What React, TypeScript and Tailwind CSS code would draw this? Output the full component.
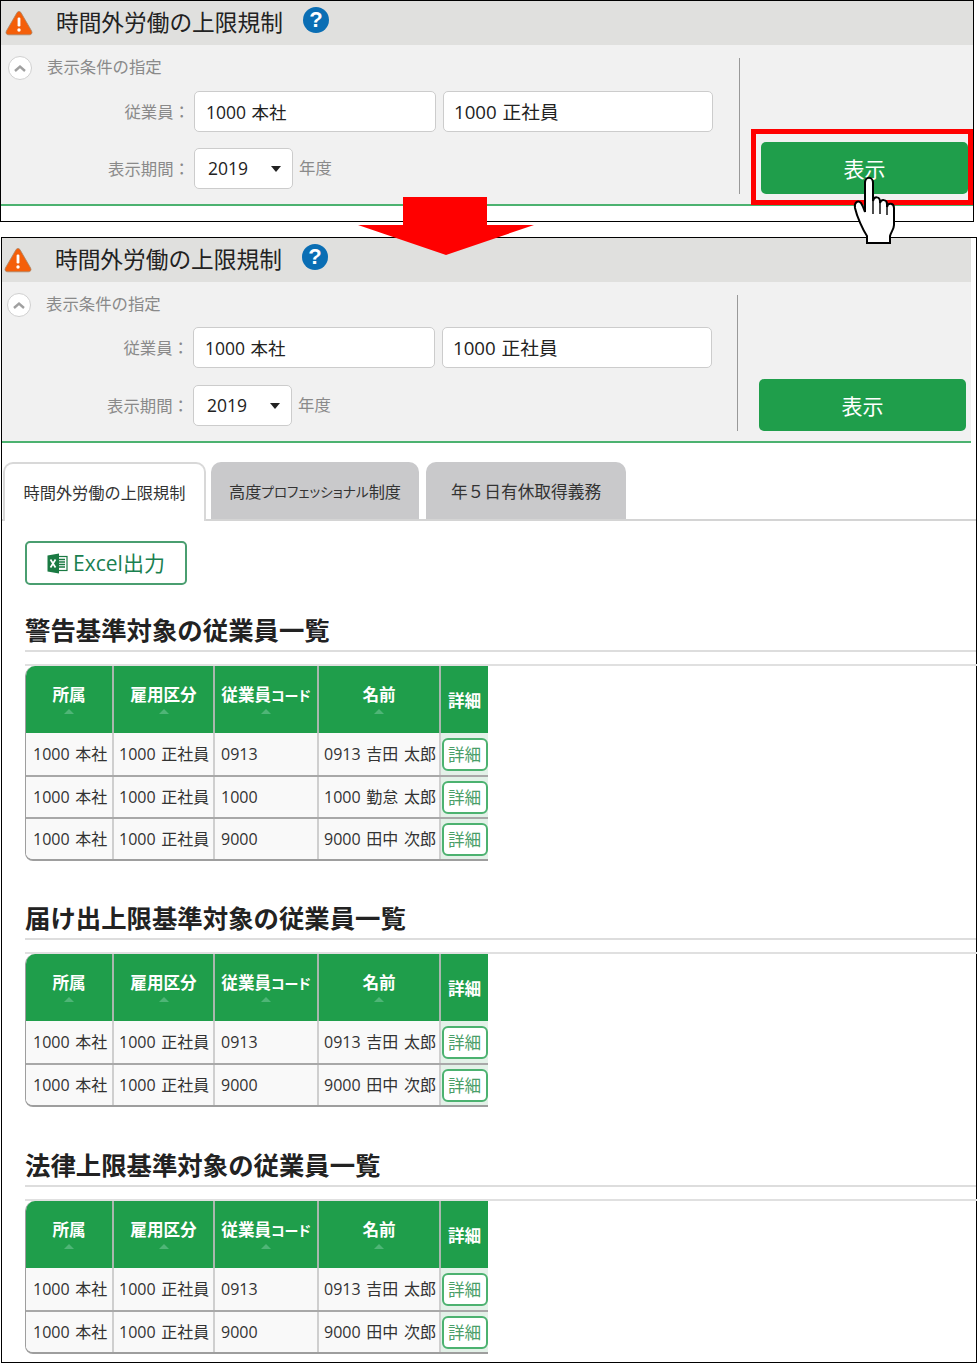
import React from "react";

const FONT = "font-['Open_Sans','Noto_Sans_CJK_JP',sans-serif]";

function Warn() {
  return (
    <svg width="28" height="26" viewBox="0 0 28 26" className="shrink-0">
      <path d="M14 1.5 C15 1.5 15.6 2 16.2 3 L26.6 21 C27.6 23 26.6 24.8 24.4 24.8 L3.6 24.8 C1.4 24.8 .4 23 1.4 21 L11.8 3 C12.4 2 13 1.5 14 1.5 Z" fill="#f45f0a" stroke="#a8866a" strokeWidth="0.8" />
      <rect x="12.6" y="7.5" width="2.8" height="9" rx="1.2" fill="#fff" />
      <circle cx="14" cy="20" r="1.7" fill="#fff" />
    </svg>
  );
}

function Help() {
  return (
    <span className="ml-[20px] mt-[-6px] flex h-[26px] w-[26px] items-center justify-center rounded-full bg-[#0a6eb4] text-[22px] font-bold leading-none text-white font-['Liberation_Sans',sans-serif]">?</span>
  );
}

function Chevron() {
  return (
    <span className="flex h-[24px] w-[24px] items-center justify-center rounded-full border border-[#d0d0d0] bg-white">
      <svg width="14" height="9" viewBox="0 0 14 9"><path d="M2 7 L7 2.5 L12 7" fill="none" stroke="#a0a0a0" strokeWidth="2.4" /></svg>
    </span>
  );
}

function Field({ w, children }: { w: string; children: React.ReactNode }) {
  return (
    <div className={`${w} flex h-[41px] items-center rounded-[5px] border border-[#cccccc] bg-white pt-[1px] text-[#222] [word-spacing:1px]`}>{children}</div>
  );
}

function Condition({ second }: { second?: boolean }) {
  return (
    <>
      <div className={`flex h-[44px] items-center bg-[#e0e0de] ${second ? "pl-[2px]" : "pl-[4px]"}`}>
        <Warn />
        <span className="ml-[23px] text-[22.7px] text-[#222]">時間外労働の上限規制</span>
        <Help />
      </div>
      <div className="flex h-[159px] bg-[#f1f1f1]">
        <div className={second ? "w-[735px] shrink-0 pl-[5px] pt-[11px]" : "w-[738px] shrink-0 pl-[7px] pt-[11px]"}>
          <div className="flex items-center">
            <Chevron />
            <span className="ml-[15px] mt-[-2px] text-[16.4px] text-[#8a8a8a]">表示条件の指定</span>
          </div>
          <div className={`${second ? "mt-[10px]" : "mt-[11px]"} flex items-center`}>
            <span className="w-[182px] pt-[1px] text-right text-[16.4px] text-[#8a8a8a]">従業員：</span>
            <Field w="w-[242px] ml-[4px] pl-[11px] text-[17.5px]">1000 本社</Field>
            <Field w="w-[270px] ml-[7px] pl-[10px] text-[18.7px]">1000 正社員</Field>
          </div>
          <div className={`${second ? "mt-[17px]" : "mt-[16px]"} flex items-center`}>
            <span className="w-[182px] pt-[1px] text-right text-[16.4px] text-[#8a8a8a]">表示期間：</span>
            <div className="ml-[4px] flex h-[41px] w-[99px] items-center justify-between rounded-[5px] border border-[#cccccc] bg-white pl-[13px] pr-[11px] text-[17.5px] text-[#222]">
              2019
              <span className="h-0 w-0 border-x-[5px] border-t-[6px] border-x-transparent border-t-[#222]" />
            </div>
            <span className="ml-[6px] text-[16.4px] text-[#8a8a8a]">年度</span>
          </div>
        </div>
        <div className="flex flex-1">
          <div className="mt-[13px] h-[136px] w-[1px] bg-[#999999]" />
          <div className="flex-1 pl-[21px] pt-[97px]">
            <div className="flex h-[52px] w-[207px] items-center justify-center rounded-[5px] bg-[#1f9e4b] pt-[3px] text-[21px] text-white">表示</div>
          </div>
        </div>
      </div>
      <div className="h-[2px] bg-[#4cb270]" />
    </>
  );
}

type Row = [string, string, string, string];

function Excel() {
  return (
    <svg width="21" height="21" viewBox="0 0 21 21" className="shrink-0">
      <rect x="10" y="3.5" width="10" height="14" fill="#fff" stroke="#1a7a43" strokeWidth="1.2" />
      <path d="M12 6.5h6M12 9h6M12 11.5h6M12 14h6" stroke="#1a7a43" strokeWidth="1.3" />
      <path d="M0.5 2.5 L12 0.5 V20.5 L0.5 18.5 Z" fill="#1a7a43" />
      <path d="M3.5 6.5 L8.5 14.5 M8.5 6.5 L3.5 14.5" stroke="#fff" strokeWidth="1.7" />
    </svg>
  );
}

function Th({ w, label, sort = true }: { w: string; label: React.ReactNode; sort?: boolean }) {
  return (
    <div className={`${w} flex flex-col items-center justify-center text-[16.6px] font-bold text-white ${sort ? "border-r-2 border-[#a9b7ae]" : ""}`}>
      <span className={sort ? "mt-[-2px] whitespace-nowrap" : "mt-[3px]"}>{label}</span>
      {sort && <span className="mt-[2px] h-0 w-0 border-x-[5px] border-b-[5px] border-x-transparent border-b-[#4fb577]" />}
    </div>
  );
}

function Td({ w, children, cls = "" }: { w: string; children: React.ReactNode; cls?: string }) {
  return <div className={`${w} ${cls} flex items-center whitespace-nowrap border-r-2 border-[#cfcfcf] bg-[#f9f9f9] text-[16px] text-[#333] [word-spacing:1.5px]`}>{children}</div>;
}

function Section({ title, rows, top }: { title: string; rows: Row[]; top: string }) {
  return (
    <section className={top}>
      <h2 className="h-[38px] border-b-2 border-[#dddddd] text-[25.4px] font-bold leading-[32px] text-[#222]">{title}</h2>
      <div className="mt-[12px] -mr-[4px] border-t-2 border-[#e0e0e0]">
        <div className="w-[463px] overflow-hidden rounded-bl-[8px] rounded-tl-[10px] border-b-2 border-l border-[#9e9e9e]">
          <div className="flex h-[67px] bg-[#1f9e4b]">
            <Th w="w-[88px]" label="所属" />
            <Th w="w-[101px]" label="雇用区分" />
            <Th w="w-[104px]" label={<>従業員<span className="text-[14px] [font-feature-settings:'palt']">コード</span></>} />
            <Th w="w-[122px]" label="名前" />
            <Th w="w-[47px]" label="詳細" sort={false} />
          </div>
          {rows.map((r, i) => (
            <div key={i} className={`flex h-[42px] ${i > 0 ? "border-t-2 border-[#a8a8a8]" : ""}`}>
              <Td w="w-[88px]" cls="pl-[7px]">{r[0]}</Td>
              <Td w="w-[101px]" cls="pl-[5px]">{r[1]}</Td>
              <Td w="w-[104px]" cls="pl-[6px]">{r[2]}</Td>
              <Td w="w-[122px]" cls="pl-[5px]">{r[3]}</Td>
              <div className="flex w-[47px] items-center justify-center bg-[#e3f1e8]">
                <span className="flex h-[33px] w-[46px] items-center justify-center rounded-[6px] border-2 border-[#4cb270] bg-white pt-[2px] text-[16.6px] text-[#4a9e68]">詳細</span>
              </div>
            </div>
          ))}
        </div>
      </div>
    </section>
  );
}

const R0913: Row = ["1000 本社", "1000 正社員", "0913", "0913 吉田 太郎"];
const R1000: Row = ["1000 本社", "1000 正社員", "1000", "1000 勤怠 太郎"];
const R9000: Row = ["1000 本社", "1000 正社員", "9000", "9000 田中 次郎"];

export default function App() {
  return (
    <div className={`relative h-[1364px] w-[977px] overflow-hidden bg-white ${FONT}`}>
      <div className="h-[222px] w-[974px] border border-black">
        <Condition />
      </div>
      <div className="ml-[1px] mt-[15px] h-[1126px] w-[976px] border border-black">
        <div className="w-[969px]">
          <Condition second />
        </div>
        <div className="mt-[20px] flex h-[58px] items-end border-b-2 border-[#d4d4d4] pl-[1px]">
          <div className="mb-[-2px] flex h-[59px] w-[203px] items-center justify-center rounded-t-[10px] border-x-2 border-t-2 border-[#d8d8d8] bg-white pt-[1px] text-[16.2px] text-[#333]">時間外労働の上限規制</div>
          <div className="ml-[5px] flex h-[57px] w-[208px] items-center justify-center rounded-t-[10px] bg-[#c9c9cb] pt-[3px] text-[16.2px] text-[#333]">高度<span className="text-[13.6px] [font-feature-settings:'palt']">プロフェッショナル</span>制度</div>
          <div className="ml-[7px] flex h-[57px] w-[200px] items-center justify-center rounded-t-[10px] bg-[#c9c9cb] pt-[3px] text-[16.7px] text-[#333]">年５日有休取得義務</div>
        </div>
        <div className="pl-[23px] pt-[20px]">
          <div className="flex h-[44px] w-[162px] items-center justify-center gap-[5px] rounded-[5px] border-2 border-[#4a9e70] pt-[1px] text-[21px] text-[#1a8050]">
            <Excel />Excel出力
          </div>
          <Section top="mt-[29px]" title="警告基準対象の従業員一覧" rows={[R0913, R1000, R9000]} />
          <Section top="mt-[41px]" title="届け出上限基準対象の従業員一覧" rows={[R0913, R9000]} />
          <Section top="mt-[42px]" title="法律上限基準対象の従業員一覧" rows={[R0913, R9000]} />
        </div>
      </div>

      {/* annotation overlays */}
      <div className="absolute left-[751px] top-[129px] h-[76px] w-[222px] border-[5px] border-[#ff0000]" />
      <svg className="absolute left-[357px] top-[196px]" width="178" height="60" viewBox="0 0 178 60">
        <path d="M46 1 H130 V29 H177 L89 59 L1 29 H46 Z" fill="#ff0000" />
      </svg>
      <svg className="absolute left-[853px] top-[176px]" width="43" height="68" viewBox="0 0 43 68">
        <path d="M12 7 C12 0 20 0 20 7 L20 25 C21 20 27 20 27 26 L27 27 C28 23 34 23 34 28 L34 31 C35 26 41 27 41 32 L41 49 C41 53 38 56 37 60 L37 67 L14 67 L14 60 C10 54 4 41 2 32 C1 26 5 24 8 27 C10 30 11 33 12 36 Z" fill="#fff" stroke="#000" strokeWidth="2" />
        <path d="M20 25 V38 M27 27 V38 M34 30 V39" fill="none" stroke="#000" strokeWidth="1.4" />
      </svg>
    </div>
  );
}
